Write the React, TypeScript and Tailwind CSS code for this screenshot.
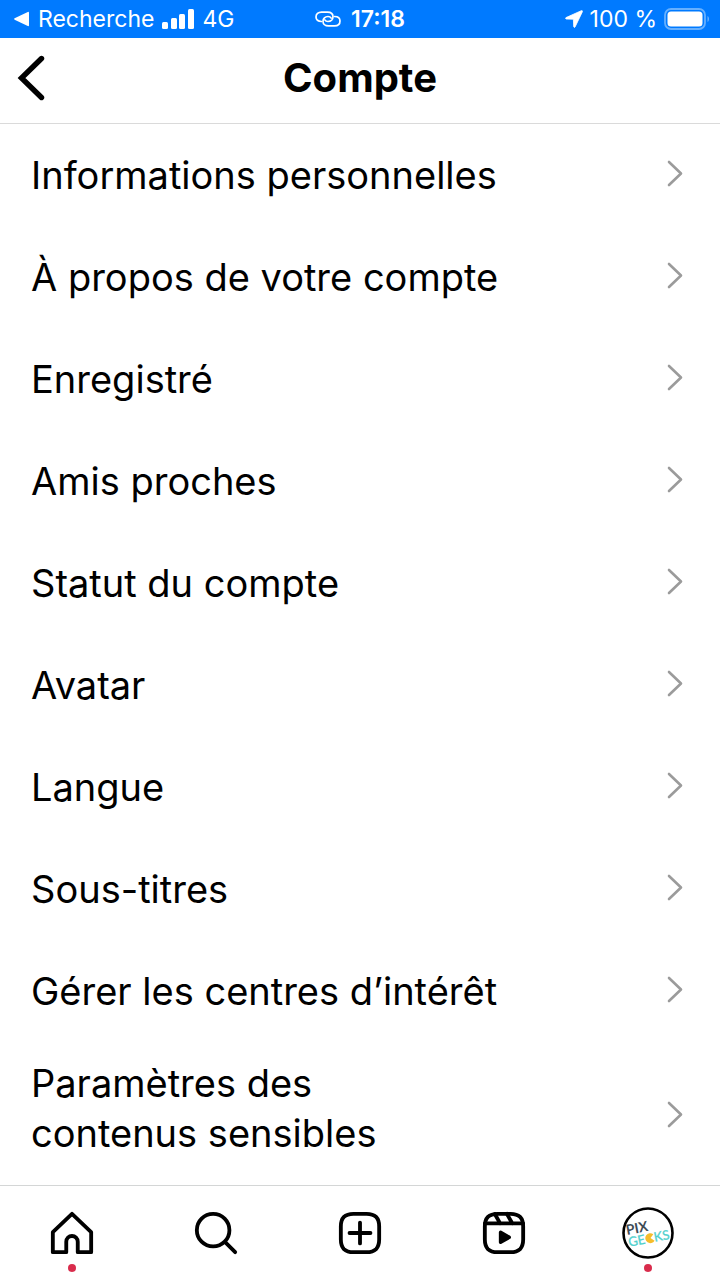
import type { ReactNode } from 'react';

const MENU_ITEMS = [
  'Informations personnelles',
  'À propos de votre compte',
  'Enregistré',
  'Amis proches',
  'Statut du compte',
  'Avatar',
  'Langue',
  'Sous-titres',
  'Gérer les centres d’intérêt',
];

function StatusBar() {
  return (
    <div className="grid h-[38px] grid-cols-3 items-center bg-[#007aff] text-[23px] leading-7 text-white">
      <div className="flex items-center gap-2 whitespace-nowrap pl-3.5">
        <button className="flex items-center gap-2">
          <svg className="h-4 w-4" viewBox="0 0 16 16" fill="currentColor" aria-hidden="true">
            <path d="M.6 7.3 13.8.9q1.200-.4 1.200.8v12.600q0 1.200-1.200.8L.6 8.700Q-.4 8 .6 7.300Z" />
          </svg>
          Recherche
        </button>
        <svg className="h-5 w-8" viewBox="0 0 32 20" fill="currentColor" aria-label="Réseau">
          <rect x="0" y="13" width="6" height="7" rx="1.5" />
          <rect x="9" y="9" width="6" height="11" rx="1.5" />
          <rect x="17" y="5" width="6" height="15" rx="1.5" />
          <rect x="26" y="0" width="6" height="20" rx="1.5" />
        </svg>
        <span>4G</span>
      </div>

      <div className="flex items-center justify-center gap-2.5 font-semibold">
        <svg className="h-4 w-[26px]" viewBox="0 0 26 16" fill="none" stroke="currentColor" strokeWidth="1.7" strokeLinecap="round" aria-hidden="true">
          <path d="M6.5 10.5C3 10.5 1 8.700 1 6c0-3 2.200-4.900 5.500-4.900h6c3.400 0 5.500 1.900 5.500 4.700 0 2.800-2.100 4.700-5 4.700-1.500 0-2.600-.6-3.200-1.600" />
          <path d="M19.500 5.500C23 5.500 25 7.300 25 10c0 3-2.200 4.900-5.500 4.900h-6c-3.400 0-5.500-1.900-5.500-4.700 0-2.800 2.100-4.700 5-4.700 1.500 0 2.600.6 3.200 1.600" />
        </svg>
        17:18
      </div>

      <div className="flex items-center justify-end gap-[7px] whitespace-nowrap pr-2.5">
        <svg className="h-[18px] w-[18px]" viewBox="0 0 18 18" fill="currentColor" aria-hidden="true">
          <path d="M16.300.7 1 7.600q-1.200.9.200 1.400l7.200.2.300 7.500q.6 1.400 1.400.2L17.400 1.700q.2-1.400-1.100-1Z" stroke="currentColor" strokeWidth=".8" />
        </svg>
        <span>100 %</span>
        <svg className="h-[22px] w-[46px]" viewBox="0 0 46 22" aria-label="Batterie">
          <rect x="1" y="1" width="40" height="20" rx="6" fill="none" stroke="#66b0ff" strokeWidth="1.800" />
          <rect x="3.500" y="3.500" width="35" height="15" rx="3.500" fill="white" />
          <path d="M43.500 8v6c2-1 2-5 0-6Z" fill="#66b0ff" />
        </svg>
      </div>
    </div>
  );
}

function ChevronRight() {
  return (
    <svg className="h-[30px] w-4 shrink-0" viewBox="0 0 16 30" fill="none" stroke="#9b9b9b" strokeWidth="2.600" strokeLinecap="round" strokeLinejoin="round" aria-hidden="true">
      <path d="m2 2 12 11.500L2 25" />
    </svg>
  );
}

function MenuRow({ children }: { children: ReactNode }) {
  return (
    <li>
      <button className="flex min-h-[102px] w-full items-center justify-between pl-[31px] pr-[37px] text-left">
        <span>{children}</span>
        <ChevronRight />
      </button>
    </li>
  );
}

function TabIcon({ children }: { children: ReactNode }) {
  return (
    <svg className="h-[46px] w-[46px]" viewBox="0 0 24 24" fill="none" stroke="currentColor" strokeWidth="2" strokeLinecap="round" strokeLinejoin="round" aria-hidden="true">
      {children}
    </svg>
  );
}

function Tab({ label, dot = false, children }: { label: string; dot?: boolean; children: ReactNode }) {
  return (
    <button aria-label={label} className="relative flex h-[94px] flex-1 items-center justify-center">
      {children}
      {dot && <span className="absolute bottom-2 left-1/2 h-2 w-2 -translate-x-1/2 rounded-full bg-[#d92c4c]" />}
    </button>
  );
}

const ROUNDED_SQUARE =
  'M2 12v3.449c0 2.849.698 4.006 1.606 4.945.94.908 2.098 1.607 4.946 1.607h6.896c2.848 0 4.006-.699 4.946-1.607.908-.939 1.606-2.096 1.606-4.945V8.552c0-2.848-.698-4.006-1.606-4.945C19.454 2.699 18.296 2 15.448 2H8.552c-2.848 0-4.006.699-4.946 1.607C2.698 4.546 2 5.704 2 8.552Z';

function ProfilePicture() {
  return (
    <svg className="h-[52px] w-[52px]" viewBox="0 0 52 52" aria-hidden="true">
      <circle cx="26" cy="26" r="24.500" fill="white" stroke="black" strokeWidth="2.600" />
      <g transform="rotate(-11 26 26)" className="font-['Lato','Inter',sans-serif]">
        <text x="5" y="24" fontSize="14" fontWeight="700" fill="#3d4b55">PIX</text>
        <text x="5" y="36" fontSize="13" fill="#4fd0cd" stroke="#4fd0cd" strokeWidth=".3">GE</text>
        <path d="M27.500 31.500 31 28.200a5 5 0 1 0 0 6.600Z" fill="#f6bd2b" />
        <text x="31" y="36" fontSize="13" fill="#4fd0cd" stroke="#4fd0cd" strokeWidth=".3">KS</text>
      </g>
    </svg>
  );
}

export default function App() {
  return (
    <div className="flex min-h-screen flex-col bg-white font-['Inter','Liberation_Sans',sans-serif] text-black">
      <StatusBar />

      <header className="grid h-[86px] grid-cols-[1fr_auto_1fr] items-center border-b border-[#dadada] pb-1.5">
        <button aria-label="Retour" className="pl-[17px]">
          <svg className="h-[46px] w-7" viewBox="0 0 28 46" fill="none" stroke="currentColor" strokeWidth="5.400" strokeLinecap="round" strokeLinejoin="miter" aria-hidden="true">
            <path d="M24.500 3.500 4.500 23l20 19.500" />
          </svg>
        </button>
        <h1 className="text-[40px] font-bold leading-[50px]">Compte</h1>
      </header>

      <main className="flex-1">
        <ul className="text-[38px] leading-[50px]">
          {MENU_ITEMS.map(item => (
            <MenuRow key={item}>{item}</MenuRow>
          ))}
          <li>
            <button className="flex w-full items-center justify-between pb-[26px] pl-[31px] pr-[37px] pt-4 text-left">
              <span>
                Paramètres des
                <br />
                contenus sensibles
              </span>
              <span className="pt-4">
                <ChevronRight />
              </span>
            </button>
          </li>
        </ul>
      </main>

      <nav className="flex border-t border-[#d4d6d6]">
        <Tab label="Accueil" dot>
          <TabIcon>
            <path d="M9.005 16.545a2.997 2.997 0 0 1 2.997-2.997A2.997 2.997 0 0 1 15 16.545V22h7V11.543L12 2 2 11.543V22h7.005Z" />
          </TabIcon>
        </Tab>
        <Tab label="Rechercher">
          <TabIcon>
            <path d="M19 10.500A8.500 8.500 0 1 1 10.500 2a8.500 8.500 0 0 1 8.500 8.500ZM16.511 16.511 22 22" />
          </TabIcon>
        </Tab>
        <Tab label="Créer">
          <TabIcon>
            <path d={ROUNDED_SQUARE} />
            <path d="M6.545 12h10.910M12 6.545v10.910" />
          </TabIcon>
        </Tab>
        <Tab label="Reels">
          <TabIcon>
            <path d={ROUNDED_SQUARE} />
            <path d="M2.049 7.002H21.950M13.504 2.001l2.858 5.001M7.207 2.110l2.795 4.892" />
            <path
              d="M9.763 17.664a.908.908 0 0 1-.454-.787V11.630a.909.909 0 0 1 1.364-.788l4.545 2.624a.909.909 0 0 1 0 1.575l-4.545 2.624a.91.91 0 0 1-.91 0Z"
              fill="currentColor"
              stroke="none"
            />
          </TabIcon>
        </Tab>
        <Tab label="Profil" dot>
          <ProfilePicture />
        </Tab>
      </nav>
    </div>
  );
}
